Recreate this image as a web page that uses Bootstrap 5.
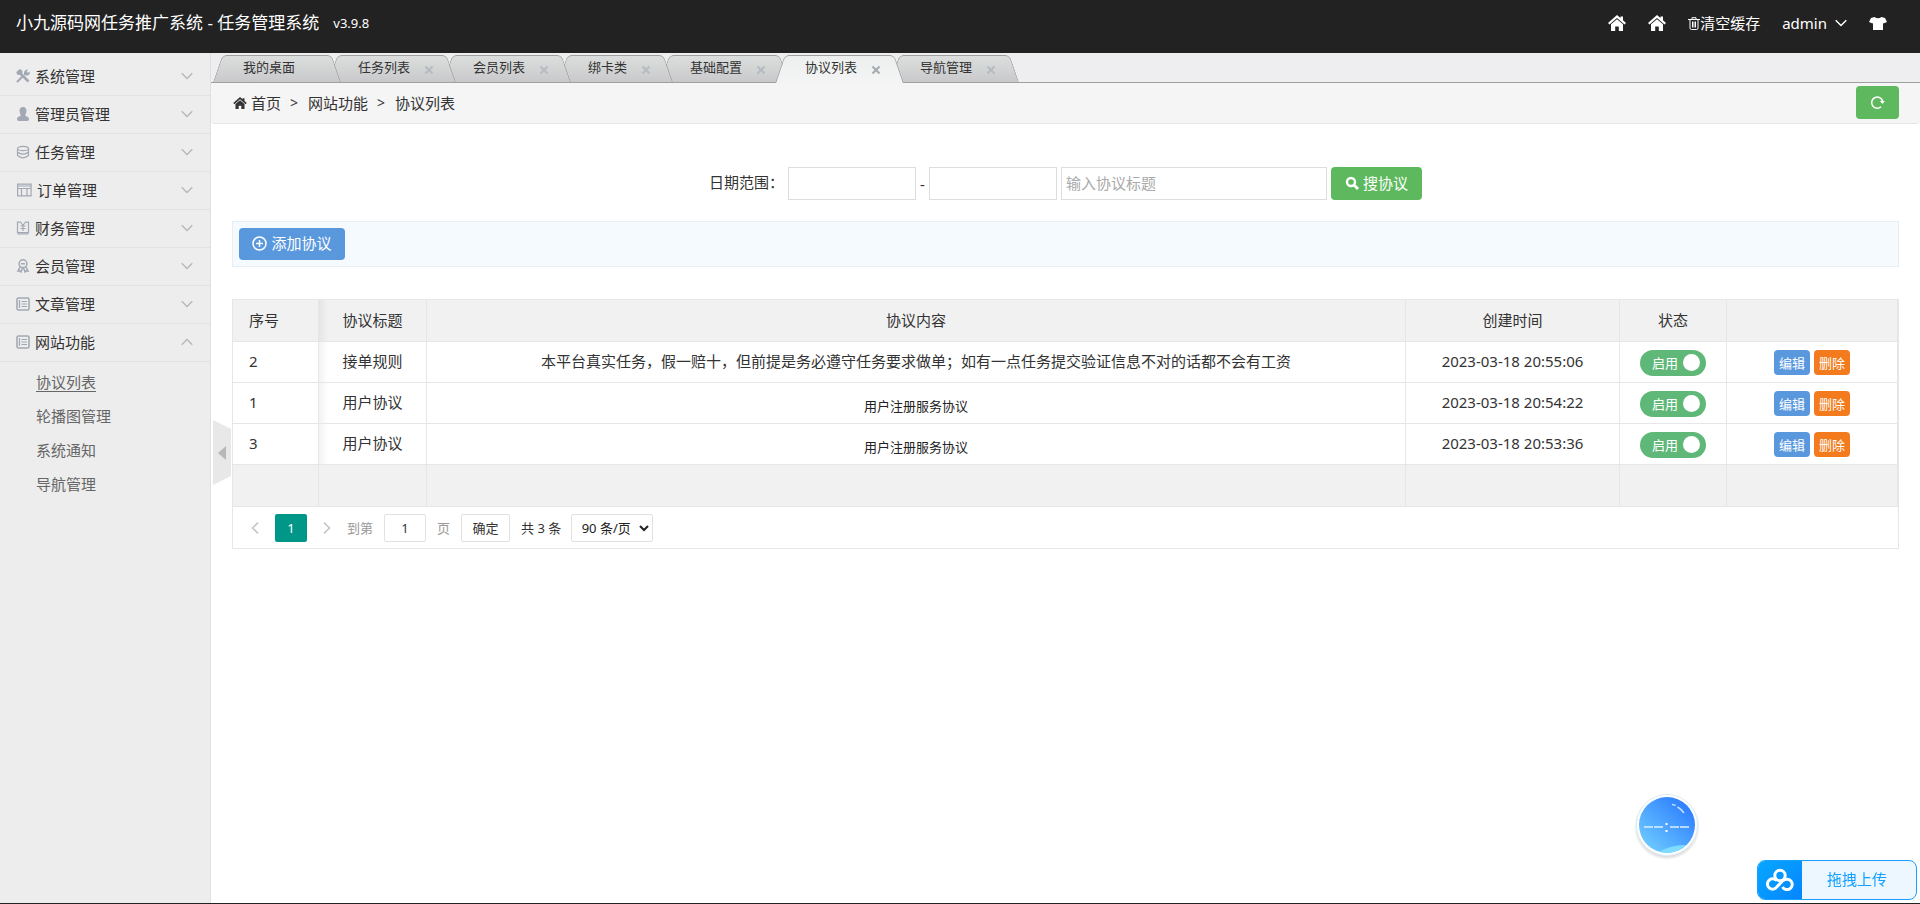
<!DOCTYPE html>
<html lang="zh-CN">
<head>
<meta charset="utf-8">
<meta name="viewport" content="width=device-width, initial-scale=1">
<title>协议列表</title>
<link href="https://cdn.jsdelivr.net/npm/bootstrap@5.3.0/dist/css/bootstrap.min.css" rel="stylesheet">
<style>
  body { font: 15px/22px "Noto Sans", "Noto Sans CJK SC", sans-serif; color: #333; border-bottom: 1px solid #222; }
  a { color: inherit; text-decoration: none; }
  svg { display: block; flex: none; }
  input, select, button { font: inherit; color: inherit; }
  .ln { fill: none; stroke: currentColor; }

  .topbar { background: #222; color: #fff; height: 53px; padding: 0 33px 7px 16px; }
  .topbar .brand-name { font-size: 17px; }
  .topbar .brand-ver { font-size: 13px; margin-left: 14px; }
  .topbar-menu { gap: 22px; }

  .sidebar { width: 211px; background: #ededed; border-right: 1px solid #e0e0e0; padding-top: 5px; }
  .side-head { height: 38px; border: 0; border-bottom: 1px solid #e2e2e2; background: none; padding: 0 17px 2px 16px; gap: 5px; }
  .side-head .side-icon { color: #a3a9b4; }
  .side-head .chev { color: #b8b8b8; margin-left: auto; }
  .side-sub { padding: 3px 0 0 36px; color: #666; }
  .side-sub a { display: block; line-height: 34px; }
  .side-sub a.current { text-decoration: underline; text-underline-offset: 3px; }

  .handle { position: absolute; left: 2px; top: 367px; border: 0; padding: 0; background: none; }

  .tabbar { background: #eeeef0; height: 30px; border-bottom: 1px solid #a0a0a0; padding: 2px 0 0 2px; font-size: 13px; }
  .tab-item { position: relative; height: 27px; padding: 0 22px 0 30px; gap: 14px; margin-right: -13px; isolation: isolate; flex: none; }
  .tab-item::before, .tab-item::after { content: ""; position: absolute; z-index: -1; top: 0; bottom: 0; width: 52%; border-top: 1px solid #a0a0a0; background: linear-gradient(#dcdedd, #c9c9cb); }
  .tab-item::before { left: 0; border-left: 1px solid #a0a0a0; border-radius: 5px 0 0 0; transform: skewX(-19deg); transform-origin: 0 100%; }
  .tab-item::after { right: 0; border-right: 1px solid #a0a0a0; border-radius: 0 5px 0 0; transform: skewX(19deg); transform-origin: 100% 100%; }
  .tab-item a { line-height: 25px; padding-bottom: 2px; }
  .tab-item:first-child { padding-right: 46px; }
  .tab-item.current { height: 28px; }
  .tab-item.current::before, .tab-item.current::after { background: linear-gradient(#edefef, #f4f4f4); }
  .tab-close { border: 0; background: none; padding: 2px 0 0; color: #b4bbc1; }
  .tab-item.current .tab-close { color: #a5aab0; }

  .crumbs { background: #f5f5f5; height: 41px; border-bottom: 1px solid #e5e5e5; border-radius: 0 0 4px 4px; padding: 0 21px 1px 22px; }
  .crumbs .sep { margin: 0 10px 0 9px; font-size: 14px; }

  .act { border: 0; border-radius: 4px; color: #fff; padding: 0 0 2px; display: inline-flex; align-items: center; justify-content: center; }
  .act-green { background: #5eb95e; }
  .act-blue { background: #5a98de; }
  .act-orange { background: #f37b1d; }
  .act-refresh { width: 43px; height: 33px; padding: 0; }
  .act-search { width: 91px; height: 33px; gap: 4px; }
  .act-add { width: 106px; height: 32px; gap: 4px; }
  .act-sm { height: 25px; width: 36px; font-size: 13px; padding: 0; }

  .page-body { padding: 43px 21px 0; }
  .search-line { gap: 4px; margin-bottom: 21px; }
  .search-line label { padding-bottom: 3px; }
  .field { height: 33px; border: 1px solid #ddd; border-radius: 0; padding: 0 4px 2px; background: #fff; }
  .field::placeholder { color: #aaa; opacity: 1; }
  .field-date { width: 128px; }
  .field-title { width: 266px; }
  .tools { background: #f5faff; border: 1px solid #e8eef2; padding: 6px; height: 46px; margin-bottom: 32px; }

  .grid-box { border: 1px solid #e6e6e6; }
  .grid-box table { --bs-table-bg: transparent; table-layout: fixed; color: inherit; border-collapse: separate; border-spacing: 0; margin: 0; }
  .grid-box th, .grid-box td { height: 41px; padding: 0 16px 2px; border: solid #e6e6e6; border-width: 0 1px 1px 0; font-weight: 400; text-align: center; vertical-align: middle; white-space: nowrap; }
  .grid-box th:first-child, .grid-box td:first-child { text-align: left; }
  .grid-box thead tr, .grid-box tfoot tr { background: #f1f1f1; }
  .grid-box thead th, .grid-box tfoot td { height: 42px; }
  .grid-box th:nth-child(2), .grid-box tbody td:nth-child(2) { background-image: linear-gradient(90deg, rgba(0,0,0,.05), transparent 9px); }
  .fine { font-size: 13px; color: #222; padding-top: 7px; }
  .switch-pill { background: #5fb878; color: #fff; width: 66px; height: 26px; border-radius: 13px; font-size: 13px; padding: 0 6px 0 12px; margin-top: 3px; }
  .switch-pill input { appearance: none; width: 17px; height: 17px; border-radius: 50%; background: #fff; margin: 0; }
  .row-acts { gap: 4px; margin-top: 3px; }

  .pager { height: 41px; padding: 0 18px; font-size: 13px; }
  .pager .box { height: 28px; border: 1px solid #e2e2e2; border-radius: 2px; background: #fff; text-align: center; padding: 0; }
  .pager .step { border: 0; padding: 0; background: none; color: #c6c6c6; }
  .pager .cur { background: #009688; color: #fff; width: 32px; height: 28px; border-radius: 2px; margin: 0 16px; line-height: 28px; text-align: center; }
  .pager .mute { color: #999; }
  .pager .box-page { width: 42px; margin: 0 11px; }
  .pager .box-ok { width: 49px; margin: 0 11px; }
  .pager .box-size { width: 82px; padding: 0 4px; margin-left: 10px; color: #222; }

  .ball { position: fixed; right: 219px; bottom: 44px; }
  .upload { position: fixed; right: 3px; bottom: 4px; width: 160px; height: 40px; border: 1px solid #1a9fff; border-radius: 8px; background: #edf7ff; color: #14a0ff; padding: 0; overflow: hidden; }
  .upload .logo { width: 44px; background: linear-gradient(135deg, #06a7ff, #0685ff); }
  .upload .caption-text { padding: 0 4px 2px 0; }
</style>
</head>
<body class="d-flex flex-column min-vh-100">

<svg width="0" height="0" class="position-absolute" aria-hidden="true">
  <symbol id="home" viewBox="0 0 18 16"><path fill="currentColor" d="M9 0 0 8l1.500 1.600L9 3l7.500 6.600L18 8l-3-2.700V1.500h-2.500v1.600zM3 9.300V16h4.200v-4.500h3.600V16H15V9.300L9 4.200z"/></symbol>
  <symbol id="down" viewBox="0 0 12 8"><path class="ln" stroke-width="1.400" d="m.7 1.200 5.300 5.300 5.300-5.300"/></symbol>
  <symbol id="up" viewBox="0 0 12 8"><path class="ln" stroke-width="1.400" d="m.7 6.800 5.300-5.300 5.300 5.300"/></symbol>
  <symbol id="cross" viewBox="0 0 10 10"><path class="ln" stroke-width="2" d="m1.500 1.500 7 7m0-7-7 7"/></symbol>
  <symbol id="news" viewBox="0 0 14 14"><rect class="ln" x="1" y="1" width="12" height="12" rx="1.500" stroke-width="1.600"/><path class="ln" stroke-width="1.200" d="M3.500 3v8M5.500 4.500H11M5.500 7H11M5.500 9.500H11"/></symbol>
</svg>

<header class="topbar d-flex align-items-center justify-content-between">
  <div class="d-flex align-items-center">
    <a href="#" class="brand-name">小九源码网任务推广系统 - 任务管理系统</a>
    <span class="brand-ver">v3.9.8</span>
  </div>
  <nav class="topbar-menu d-flex align-items-center">
    <a href="#" aria-label="首页"><svg width="18" height="16"><use href="#home"/></svg></a>
    <a href="#" aria-label="前台"><svg width="18" height="16"><use href="#home"/></svg></a>
    <a href="#" class="d-flex align-items-center">
      <svg width="12" height="13" viewBox="0 0 12 13"><path class="ln" d="M0 2.500h12M4 2V.7h4V2M2 2.500V11q0 1.500 1.500 1.500h5Q10 12.500 10 11V2.500M4.500 4.500v6M6 4.500v6M7.500 4.500v6"/></svg>清空缓存
    </a>
    <a href="#" class="d-flex align-items-center gap-2">admin <svg width="12" height="8"><use href="#down"/></svg></a>
    <a href="#" aria-label="换肤"><svg width="18" height="13" viewBox="0 0 18 13"><path fill="currentColor" d="M5.500 0Q9 2.500 12.500 0L16 1l2 4-3.500 1.500-.5-.5v7H4V6l-.5.500L0 5l2-4z"/></svg></a>
  </nav>
</header>

<div class="d-flex flex-grow-1">
  <aside class="sidebar flex-shrink-0">
    <button class="side-head d-flex align-items-center w-100">
      <svg class="side-icon" width="14" height="14" viewBox="0 0 14 14"><path class="ln" stroke-width="2.600" d="m4 4 8.500 8.500"/><path class="ln" stroke-width="2" d="m1 13 6.500-6.500M9 5l2-2"/><path fill="currentColor" d="M.5 3 3 .5Q6-.5 6.500 3 6 6 3 6 0 6 .5 3M8 3Q9 0 12 .5L10.500 3 11.500 4 13.800 2.500Q14 6 11 6.500L8 6z"/></svg>系统管理
      <svg class="chev" width="12" height="8"><use href="#down"/></svg>
    </button>
    <button class="side-head d-flex align-items-center w-100">
      <svg class="side-icon" width="14" height="14" viewBox="0 0 14 14"><path fill="currentColor" d="M7 0c2.500 0 3.600 1.800 3.500 4C10.400 6 9.500 7 9.300 8.800c1 .7 3.700 1 3.700 3.200 0 1.500-1 2-2 2H3c-1 0-2-.5-2-2 0-2.200 2.700-2.500 3.700-3.200C4.500 7 3.600 6 3.500 4 3.400 1.800 4.500 0 7 0"/></svg>管理员管理
      <svg class="chev" width="12" height="8"><use href="#down"/></svg>
    </button>
    <button class="side-head d-flex align-items-center w-100">
      <svg class="side-icon" width="14" height="14" viewBox="0 0 14 14"><g class="ln" stroke-width="1.200"><ellipse cx="7" cy="3.500" rx="5.500" ry="2.200"/><path d="M1.500 3.500v7Q4 12.800 7 12.800t5.500-2.300v-7M1.500 7Q4 9.200 7 9.200T12.500 7"/></g></svg>任务管理
      <svg class="chev" width="12" height="8"><use href="#down"/></svg>
    </button>
    <button class="side-head d-flex align-items-center w-100">
      <svg class="side-icon" width="16" height="14" viewBox="0 0 16 14"><path class="ln" stroke-width="1.200" d="M1.600 1.200h13.500v11.600H1.600zM1.600 5.500h13.500M5.500 5.500v7M11 5.500v7M2 3h13"/></svg>订单管理
      <svg class="chev" width="12" height="8"><use href="#down"/></svg>
    </button>
    <button class="side-head d-flex align-items-center w-100">
      <svg class="side-icon" width="14" height="14" viewBox="0 0 14 14"><path class="ln" stroke-width="1.200" d="M5 1.200H1.500v10.500h11V1.200H9M1.500 13h11M4.500 1 7 4.500 9.500 1M7 4.500v5.500M4.500 5h5M4.500 7.500h5"/></svg>财务管理
      <svg class="chev" width="12" height="8"><use href="#down"/></svg>
    </button>
    <button class="side-head d-flex align-items-center w-100">
      <svg class="side-icon" width="14" height="14" viewBox="0 0 14 14"><g class="ln" stroke-width="1.500"><circle cx="7" cy="4.700" r="3.900"/><path d="M4 8 2 12l2-.3.9 1.300L6.500 9M10 8l2 4-2-.3-.9 1.300L7.500 9M5 4.700h4"/></g></svg>会员管理
      <svg class="chev" width="12" height="8"><use href="#down"/></svg>
    </button>
    <button class="side-head d-flex align-items-center w-100">
      <svg class="side-icon" width="14" height="14"><use href="#news"/></svg>文章管理
      <svg class="chev" width="12" height="8"><use href="#down"/></svg>
    </button>
    <button class="side-head d-flex align-items-center w-100" aria-expanded="true">
      <svg class="side-icon" width="14" height="14"><use href="#news"/></svg>网站功能
      <svg class="chev" width="12" height="8"><use href="#up"/></svg>
    </button>
    <nav class="side-sub">
      <a href="#" class="current">协议列表</a>
      <a href="#">轮播图管理</a>
      <a href="#">系统通知</a>
      <a href="#">导航管理</a>
    </nav>
  </aside>

  <main class="flex-grow-1 position-relative bg-white">
    <button class="handle" aria-label="收起菜单">
      <svg width="18" height="65" viewBox="0 0 18 65"><path fill="#e8e8e8" d="M0 0 18 9v47L0 65z"/><path fill="#b8b8b8" d="M13 26v14l-8-7z"/></svg>
    </button>

    <ul class="tabbar list-unstyled d-flex mb-0">
      <li class="tab-item d-flex" style="z-index:7"><a href="#">我的桌面</a></li>
      <li class="tab-item d-flex" style="z-index:6"><a href="#">任务列表</a><button class="tab-close" aria-label="关闭"><svg width="10" height="10"><use href="#cross"/></svg></button></li>
      <li class="tab-item d-flex" style="z-index:5"><a href="#">会员列表</a><button class="tab-close" aria-label="关闭"><svg width="10" height="10"><use href="#cross"/></svg></button></li>
      <li class="tab-item d-flex" style="z-index:4"><a href="#">绑卡类</a><button class="tab-close" aria-label="关闭"><svg width="10" height="10"><use href="#cross"/></svg></button></li>
      <li class="tab-item d-flex" style="z-index:3"><a href="#">基础配置</a><button class="tab-close" aria-label="关闭"><svg width="10" height="10"><use href="#cross"/></svg></button></li>
      <li class="tab-item d-flex current" style="z-index:8"><a href="#">协议列表</a><button class="tab-close" aria-label="关闭"><svg width="10" height="10"><use href="#cross"/></svg></button></li>
      <li class="tab-item d-flex" style="z-index:1"><a href="#">导航管理</a><button class="tab-close" aria-label="关闭"><svg width="10" height="10"><use href="#cross"/></svg></button></li>
    </ul>

    <nav class="crumbs d-flex align-items-center">
      <svg class="me-1" width="14" height="12"><use href="#home"/></svg>
      <a href="#">首页</a><span class="sep">&gt;</span><a href="#">网站功能</a><span class="sep">&gt;</span><span>协议列表</span>
      <button class="act act-green act-refresh ms-auto" aria-label="刷新">
        <svg width="15" height="15" viewBox="0 0 15 15"><path class="ln" stroke-width="1.500" d="M11 11.800A5.600 5.600 0 1 1 12.700 6.500"/><path fill="currentColor" d="M9.800 6h5l-2.300 3z"/></svg>
      </button>
    </nav>

    <div class="page-body">
      <form class="search-line d-flex justify-content-center align-items-center">
        <label for="from">日期范围：</label>
        <input id="from" class="field field-date" type="text">
        <span>-</span>
        <input class="field field-date" type="text" aria-label="结束日期">
        <input class="field field-title" type="text" aria-label="协议标题" placeholder="输入协议标题">
        <button type="button" class="act act-green act-search"><svg width="14" height="14" viewBox="0 0 14 14"><circle class="ln" cx="6" cy="6" r="4" stroke-width="2.400"/><path class="ln" stroke-width="2.800" d="m9 9 4 4"/></svg>搜协议</button>
      </form>

      <div class="tools d-flex align-items-center">
        <button class="act act-blue act-add"><svg width="15" height="15" viewBox="0 0 15 15"><circle class="ln" cx="7.500" cy="7.500" r="6.500" stroke-width="1.500"/><path class="ln" stroke-width="1.500" d="M4 7.500h7M7.500 4v7"/></svg>添加协议</button>
      </div>

      <div class="grid-box">
        <table class="table">
          <colgroup><col style="width:86px"><col style="width:108px"><col><col style="width:214px"><col style="width:107px"><col style="width:171px"></colgroup>
          <thead>
            <tr><th>序号</th><th>协议标题</th><th>协议内容</th><th>创建时间</th><th>状态</th><th></th></tr>
          </thead>
          <tbody>
            <tr>
              <td>2</td><td>接单规则</td><td>本平台真实任务，假一赔十，但前提是务必遵守任务要求做单；如有一点任务提交验证信息不对的话都不会有工资</td><td>2023-03-18 20:55:06</td>
              <td><label class="switch-pill d-inline-flex align-items-center justify-content-between align-middle">启用<input type="checkbox" checked></label></td>
              <td><div class="row-acts d-flex justify-content-center"><button class="act act-blue act-sm">编辑</button><button class="act act-orange act-sm">删除</button></div></td>
            </tr>
            <tr>
              <td>1</td><td>用户协议</td><td><div class="fine">用户注册服务协议</div></td><td>2023-03-18 20:54:22</td>
              <td><label class="switch-pill d-inline-flex align-items-center justify-content-between align-middle">启用<input type="checkbox" checked></label></td>
              <td><div class="row-acts d-flex justify-content-center"><button class="act act-blue act-sm">编辑</button><button class="act act-orange act-sm">删除</button></div></td>
            </tr>
            <tr>
              <td>3</td><td>用户协议</td><td><div class="fine">用户注册服务协议</div></td><td>2023-03-18 20:53:36</td>
              <td><label class="switch-pill d-inline-flex align-items-center justify-content-between align-middle">启用<input type="checkbox" checked></label></td>
              <td><div class="row-acts d-flex justify-content-center"><button class="act act-blue act-sm">编辑</button><button class="act act-orange act-sm">删除</button></div></td>
            </tr>
          </tbody>
          <tfoot><tr><td></td><td></td><td></td><td></td><td></td><td></td></tr></tfoot>
        </table>
        <div class="pager d-flex align-items-center">
          <button class="step" aria-label="上一页"><svg width="8" height="12" viewBox="0 0 8 12"><path class="ln" stroke-width="1.600" d="M7 .7 1.500 6 7 11.300"/></svg></button>
          <span class="cur">1</span>
          <button class="step" aria-label="下一页"><svg width="8" height="12" viewBox="0 0 8 12"><path class="ln" stroke-width="1.600" d="M1 .7 6.500 6 1 11.300"/></svg></button>
          <label for="goto" class="mute ms-3">到第</label>
          <input id="goto" class="box box-page" type="text" value="1">
          <span class="mute">页</span>
          <button class="box box-ok">确定</button>
          <span>共 3 条</span>
          <select class="box box-size" aria-label="每页条数"><option>90 条/页</option></select>
        </div>
      </div>
    </div>
  </main>
</div>

<svg class="ball" width="68" height="70" viewBox="0 0 68 70" role="img" aria-label="时钟">
  <defs>
    <linearGradient id="sky" x1="0.150" y1="0.900" x2="0.850" y2="0.150"><stop offset="0" stop-color="#6cc8ff"/><stop offset="1" stop-color="#2f80ff"/></linearGradient>
    <radialGradient id="shade"><stop offset="0.850" stop-color="#000" stop-opacity=".18"/><stop offset="1" stop-color="#000" stop-opacity="0"/></radialGradient>
    <clipPath id="disc"><circle cx="34" cy="35" r="28"/></clipPath>
  </defs>
  <circle cx="34" cy="37" r="33" fill="url(#shade)"/>
  <circle cx="34" cy="35" r="30.500" fill="#fff" stroke="#dcecf6"/>
  <circle cx="34" cy="35" r="28" fill="url(#sky)"/>
  <path clip-path="url(#disc)" fill="#7fdcff" d="M24 63q14-9 32-8v10H24z"/>
  <path d="M11 37h9M21 37h9M37 37h9M47 37h9" stroke="#dcefff" stroke-width="1.600"/>
  <path d="M32.500 33h2v2h-2zM32.500 40h2v2h-2z" fill="#fff"/>
  <path d="M39 14.500q2 .2 3.500 1M44.500 17q4 2.200 6.500 6" fill="none" stroke="#bfe0ff" stroke-width="1.500"/>
</svg>

<button class="upload d-flex align-items-stretch">
  <span class="logo d-flex align-items-center justify-content-center">
    <svg width="28" height="24" viewBox="0 0 28 24"><g fill="none" stroke="#fff" stroke-width="3"><circle cx="14" cy="7.500" r="5.200"/><path d="M18 11.500 11 18.800A5.200 5.200 0 1 1 10.500 12.500M17.500 12.500a5.200 5.200 0 1 1-1 6.500"/></g></svg>
  </span>
  <span class="caption-text flex-grow-1 align-self-center">拖拽上传</span>
</button>

<script src="https://cdn.jsdelivr.net/npm/bootstrap@5.3.0/dist/js/bootstrap.bundle.min.js"></script>
</body>
</html>
